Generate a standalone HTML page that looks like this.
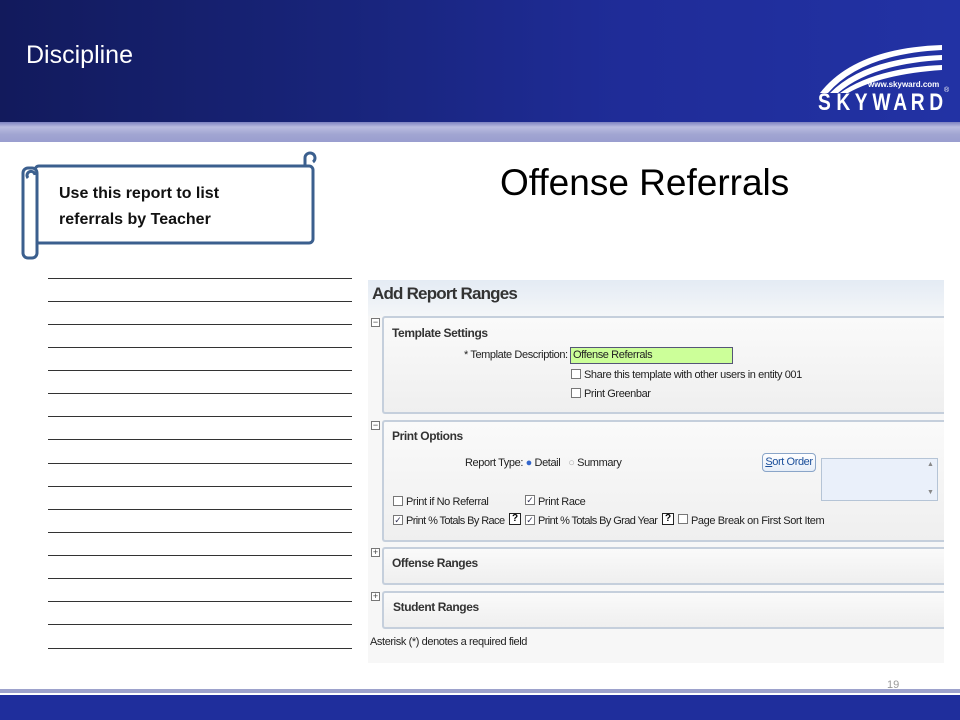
<!DOCTYPE html>
<html><head><meta charset="utf-8"><style>
*{margin:0;padding:0;box-sizing:border-box}
body{width:960px;height:720px;position:relative;overflow:hidden;background:#fff;font-family:"Liberation Sans",sans-serif}
.a{position:absolute}
.hdr{left:0;top:0;width:960px;height:122px;background:linear-gradient(90deg,#121a5c 0%,#18247a 35%,#1f2c98 65%,#2232a4 100%)}
.band{left:0;top:122px;width:960px;height:20px;background:linear-gradient(#7d82c0 0,#b9bce0 25%,#a2a6d2 60%,#9a9ecf 100%)}
.ln{left:48px;width:304px;height:1px;background:#333}
.p{font-family:"Liberation Sans",sans-serif;font-size:11px;color:#222;letter-spacing:-0.4px;white-space:nowrap}
.b{font-weight:bold;font-size:12px;color:#333}
.sec{left:382px;width:562px;border:2px solid #c5cfdc;border-right:none;border-radius:3px 0 0 3px;background:linear-gradient(#fafafa,#efefef)}
.cb{width:10px;height:10px;border:1px solid #777;background:#fff;font-size:9px;line-height:8px;text-align:center;color:#335}
.ic{left:371px;width:9px;height:9px;border:1px solid #777;background:#fff;font-size:9px;line-height:7px;text-align:center;color:#444}
.q{width:12px;height:12px;border:1px solid #222;font-size:10px;line-height:10px;text-align:center;font-weight:bold;background:#fff}
</style></head><body>
<div class="a hdr"></div>
<div class="a" style="left:26px;top:41px;color:#fff;font-size:25px">Discipline</div>
<svg class="a" style="left:810px;top:40px" width="145" height="75" viewBox="0 0 145 75">
<path d="M10 53 Q45 8 132 5 L132 10 Q52 14 18 53 Z" fill="#fff"/>
<path d="M20 53 Q55 18 132 15 L132 20 Q62 24 28 53 Z" fill="#fff"/>
<path d="M30 53 Q65 28 132 25 L132 30 Q72 34 38 53 Z" fill="#fff"/>
<text x="58" y="47" fill="#fff" font-family="Liberation Sans" font-size="8" font-weight="bold">www.skyward.com</text>
<g fill="#fff" font-family="Liberation Sans" font-size="24" font-weight="bold" transform="scale(0.8,1)">
<text x="10" y="70">S</text><text x="33" y="70">K</text><text x="56" y="70">Y</text><text x="78" y="70">W</text><text x="104" y="70">A</text><text x="126" y="70">R</text><text x="149" y="70">D</text>
</g>
<text x="134" y="52" fill="#fff" font-size="7" font-family="Liberation Sans">®</text>
</svg>
<div class="a band"></div>

<div class="a" style="left:500px;top:162px;font-size:37px;color:#000">Offense Referrals</div>

<svg class="a" style="left:15px;top:148px" width="305" height="112">
<rect x="20" y="18" width="278" height="77" rx="4" fill="#fff" stroke="#3b5f8e" stroke-width="3"/>
<path d="M290 18 V10 a5 5 0 1 1 8 4" fill="none" stroke="#3b5f8e" stroke-width="3"/>
<rect x="8" y="20" width="14" height="90" rx="5" fill="#fff" stroke="#3b5f8e" stroke-width="3"/>
<path d="M13 30 a4 4 0 1 1 7 -3" fill="none" stroke="#3b5f8e" stroke-width="3"/>
</svg>
<div class="a" style="left:59px;top:181px;font-size:16px;font-weight:bold;line-height:26px;color:#111">Use this report to list<br>referrals by Teacher</div>

<div class="a ln" style="top:278px"></div><div class="a ln" style="top:301px"></div><div class="a ln" style="top:324px"></div><div class="a ln" style="top:347px"></div><div class="a ln" style="top:370px"></div><div class="a ln" style="top:393px"></div><div class="a ln" style="top:416px"></div><div class="a ln" style="top:439px"></div><div class="a ln" style="top:463px"></div><div class="a ln" style="top:486px"></div><div class="a ln" style="top:509px"></div><div class="a ln" style="top:532px"></div><div class="a ln" style="top:555px"></div><div class="a ln" style="top:578px"></div><div class="a ln" style="top:601px"></div><div class="a ln" style="top:624px"></div><div class="a ln" style="top:648px"></div>

<div class="a" style="left:368px;top:280px;width:576px;height:383px;background:#f7f7f7"></div>
<div class="a" style="left:368px;top:280px;width:576px;height:36px;background:linear-gradient(#e4ebf4,#f4f6f8)"></div>
<div class="a" style="left:372px;top:284px;font-size:17px;font-weight:bold;color:#333;letter-spacing:-0.8px">Add Report Ranges</div>

<div class="a ic" style="top:318px">−</div>
<div class="a sec" style="top:316px;height:98px"></div>
<div class="a p b" style="left:392px;top:326px">Template Settings</div>
<div class="a p" style="left:464px;top:349px">* Template Description:</div>
<div class="a p" style="left:570px;top:347px;width:163px;height:17px;background:#ccff99;border:1px solid #557;padding:1px 2px">Offense Referrals</div>
<div class="a cb" style="left:571px;top:369px"></div><div class="a p" style="left:584px;top:369px">Share this template with other users in entity 001</div>
<div class="a cb" style="left:571px;top:388px"></div><div class="a p" style="left:584px;top:388px">Print Greenbar</div>

<div class="a ic" style="top:421px">−</div>
<div class="a sec" style="top:420px;height:122px"></div>
<div class="a p b" style="left:392px;top:429px">Print Options</div>
<div class="a p" style="left:465px;top:457px">Report Type: <span style="color:#36c">●</span> Detail &nbsp; <span style="color:#aaa">○</span> Summary</div>
<div class="a p" style="left:762px;top:453px;width:54px;height:19px;border:1px solid #8aa5c8;border-radius:4px;background:linear-gradient(#fff,#e6eef8);color:#1a4e9a;text-align:center;line-height:16px"><u>S</u>ort Order</div>
<div class="a" style="left:821px;top:458px;width:117px;height:43px;border:1px solid #b5c4d6;background:#eaf0fa"></div>
<div class="a" style="left:927px;top:461px;font-size:7px;color:#888">▲</div>
<div class="a" style="left:927px;top:489px;font-size:7px;color:#888">▼</div>
<div class="a cb" style="left:393px;top:496px"></div><div class="a p" style="left:406px;top:496px">Print if No Referral</div>
<div class="a cb" style="left:525px;top:495px">✓</div><div class="a p" style="left:538px;top:496px">Print Race</div>
<div class="a cb" style="left:393px;top:515px">✓</div><div class="a p" style="left:406px;top:515px;letter-spacing:-0.6px">Print % Totals By Race</div>
<div class="a q" style="left:509px;top:513px">?</div>
<div class="a cb" style="left:525px;top:515px">✓</div><div class="a p" style="left:538px;top:515px;letter-spacing:-0.6px">Print % Totals By Grad Year</div>
<div class="a q" style="left:662px;top:513px">?</div>
<div class="a cb" style="left:678px;top:514px"></div><div class="a p" style="left:691px;top:515px">Page Break on First Sort Item</div>

<div class="a ic" style="top:548px">+</div>
<div class="a sec" style="top:547px;height:38px"></div>
<div class="a p b" style="left:392px;top:556px">Offense Ranges</div>
<div class="a ic" style="top:592px">+</div>
<div class="a sec" style="top:591px;height:38px"></div>
<div class="a p b" style="left:393px;top:600px">Student Ranges</div>
<div class="a p" style="left:370px;top:636px">Asterisk (*) denotes a required field</div>

<div class="a" style="left:887px;top:679px;font-size:11px;color:#999">19</div>
<div class="a" style="left:0;top:689px;width:960px;height:4px;background:#9da2cc"></div>
<div class="a" style="left:0;top:695px;width:960px;height:25px;background:#1f2e9c"></div>
</body></html>
